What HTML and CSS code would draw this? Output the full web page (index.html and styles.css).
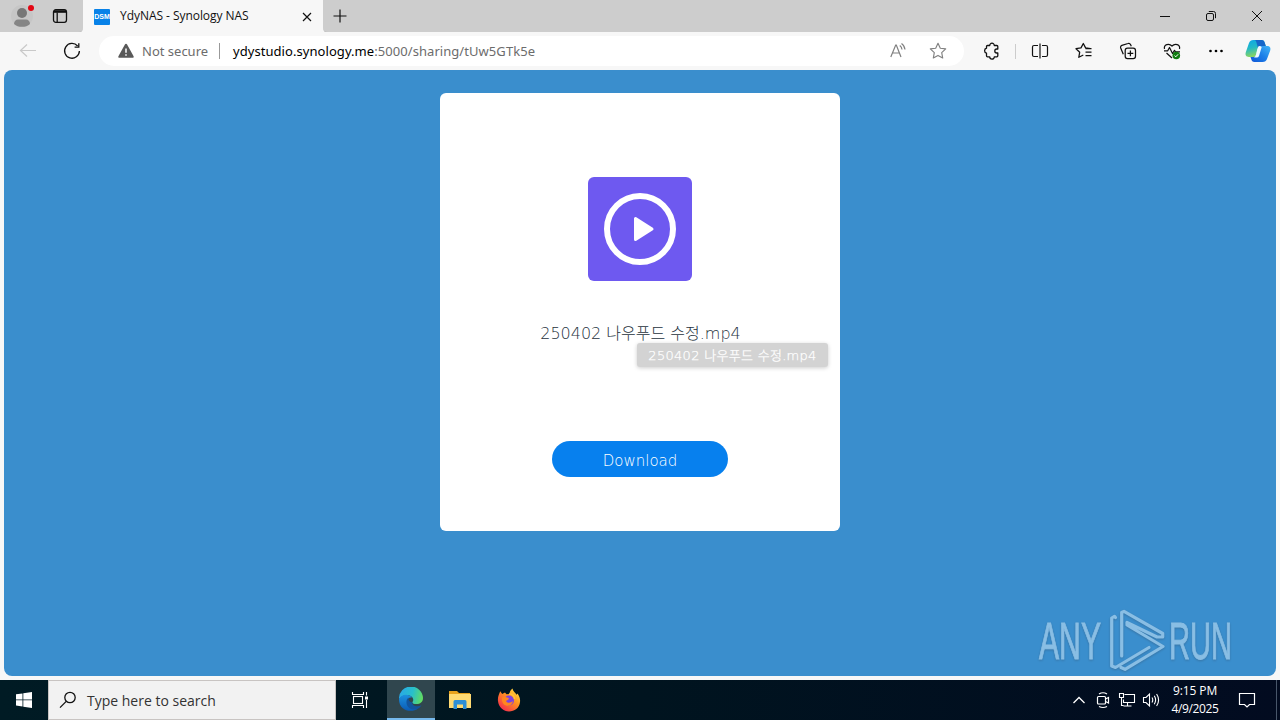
FILE: index.html
```html
<!DOCTYPE html>
<html lang="en">
<head>
<meta charset="utf-8">
<title>YdyNAS - Synology NAS</title>
<link rel="stylesheet" href="styles.css">
</head>
<body>
<div class="desktop">
  <header class="tabstrip">
    <div class="strip-left">
      <span class="cell w44"><svg width="24" height="26" viewBox="0 0 24 26"><circle cx="12" cy="13" r="11" fill="#c6c6c6"/><circle cx="12" cy="10" r="5" fill="#777"/><path d="M4 21c0-3 2-4.500 4-4.500h8c2 0 4 1.500 4 4.500-2 2-5 2.800-8 2.800S6 23 4 21z" fill="#858585"/><circle cx="21" cy="5" r="3" fill="#e30613"/></svg></span>
      <span class="cell w32"><svg width="16" height="16" viewBox="0 0 16 16" fill="none" stroke="#111" stroke-width="1.300"><rect x="1.500" y="1.700" width="13" height="12.600" rx="2.300"/><path d="M5.200 4.500v9.500"/><path d="M2 3.500h12" stroke-width="2.600"/></svg></span>
    </div>
    <div class="tab">
      <span class="favicon">DSM</span>
      <span class="tab-title">YdyNAS - Synology NAS</span>
      <svg class="tab-close" width="10" height="10" viewBox="0 0 10 10" stroke="#111" stroke-width="1.200"><path d="M1 1l8 8M9 1l-8 8"/></svg>
    </div>
    <div class="strip-right">
      <svg class="plus" width="14" height="14" viewBox="0 0 14 14" stroke="#111" stroke-width="1.200"><path d="M7 .5v13M.5 7h13"/></svg>
      <div class="controls">
        <span class="cell w46"><svg width="12" height="12" viewBox="0 0 12 12" stroke="#111"><path d="M1 6.500h10"/></svg></span>
        <span class="cell w46"><svg width="12" height="12" viewBox="0 0 12 12" stroke="#111" fill="none"><rect x="1.500" y="3.500" width="7" height="7" rx="1.500"/><path d="M3.800 1.500h4.700a2 2 0 0 1 2 2v4.700"/></svg></span>
        <span class="cell w46"><svg width="12" height="12" viewBox="0 0 12 12" stroke="#111"><path d="M1 1l10 10M11 1L1 11"/></svg></span>
      </div>
    </div>
  </header>

  <div class="toolbar">
    <div class="nav">
      <span class="cell w44"><svg width="18" height="16" viewBox="0 0 18 16" fill="none" stroke="#c9c9c9" stroke-width="1.200"><path d="M17 7.500H1.500M8 1.500l-6.500 6 6.500 6"/></svg></span>
      <span class="cell w44"><svg width="18" height="18" viewBox="0 0 18 18" fill="none" stroke="#111" stroke-width="1.300"><path d="M14.600 4A7.400 7.400 0 1 0 16.400 9"/><path d="M15.800 1.200v4h-4.200"/></svg></span>
    </div>
    <div class="address">
      <svg class="warn" width="16" height="16" viewBox="0 0 16 16"><path d="M6.900 1.400a1.250 1.250 0 0 1 2.200 0l6.500 11.800c.4.900-.2 1.600-1.100 1.600h-13c-.9 0-1.500-.7-1.100-1.600z" fill="#595959"/><path d="M8 5.500v4.200M8 11.200v1.600" stroke="#fff" stroke-width="1.500"/></svg>
      <span class="insecure">Not secure</span>
      <span class="rule"></span>
      <span class="url"><b>ydystudio.synology.me</b>:5000/sharing/tUw5GTk5e</span>
      <span class="cell w40 addr-icons"><svg width="18" height="18" viewBox="0 0 18 18" fill="none" stroke="#808080" stroke-width="1.200"><path d="M1.800 15L6.700 3h.6l4.700 12M3.500 11h6.800"/><path d="M10.800 3.500q2 1.500 2.200 4M12.500 1.500q3 2 3.500 6"/></svg></span>
      <span class="cell w40"><svg width="18" height="18" viewBox="0 0 18 18" fill="none" stroke="#808080" stroke-width="1.150" stroke-linejoin="round"><path d="M9 1.300l2.300 4.900 5.400.7-4 3.700 1 5.400L9 13.400 4.300 16l1-5.400-4-3.700 5.400-.7z"/></svg></span>
    </div>
    <div class="tools">
      <span class="cell w44"><svg width="18" height="18" viewBox="0 0 18 18" fill="none" stroke="#111" stroke-width="1.300" stroke-linejoin="round"><path d="M3.500 6.200V4.500a1 1 0 0 1 1-1h2.200a2.300 2.300 0 0 1 4.600 0h2.500a1 1 0 0 1 1 1V7h-1a2 2 0 0 0 0 4h1v2.800a1 1 0 0 1-1 1h-2.500a2.300 2.300 0 0 1-4.600 0H4.500a1 1 0 0 1-1-1v-2.600a2.600 2.600 0 0 1 0-5z"/></svg></span>
      <span class="tool-rule"></span>
      <span class="cell w44"><svg width="18" height="18" viewBox="0 0 18 18" fill="none" stroke="#111" stroke-width="1.200"><path d="M7 3.500H3A1.500 1.500 0 0 0 1.500 5v8A1.500 1.500 0 0 0 3 14.500h4M11 3.500h4A1.500 1.500 0 0 1 16.500 5v8a1.500 1.500 0 0 1-1.500 1.500h-4M9 1.500v15"/></svg></span>
      <span class="cell w44"><svg width="18" height="18" viewBox="0 0 18 18" fill="none" stroke="#111" stroke-width="1.250" stroke-linejoin="round"><path d="M15.500 6.500l-4.900-.6L8.300 1.500 6 5.900l-5 .8 3.700 3.500L3.800 15.300 8.300 13M10.500 6.500h6M10.500 10h6M10.500 13.500h6"/></svg></span>
      <span class="cell w44"><svg width="18" height="18" viewBox="0 0 18 18" fill="none" stroke="#111" stroke-width="1.250"><rect x="6.200" y="6.200" width="10.300" height="10.300" rx="2.300"/><path d="M11.400 8.500v5.800M8.500 11.400h5.800"/><path d="M4.300 12.200L1.700 6A2 2 0 0 1 2.900 3.400L9 1.500a2 2 0 0 1 2.500 1l.8 1.700"/></svg></span>
      <span class="cell w44"><svg width="18" height="18" viewBox="0 0 18 18" fill="none" stroke="#111" stroke-width="1.200" stroke-linejoin="round"><path d="M1.500 7C.5 2.500 6 .8 9 4c3-3.200 8.500-1.500 7.500 3M3.500 11L9 16"/><path d="M1 8.800h3.700l1.800-3.300 3 6 2-3.200 1 1.500H17"/><circle cx="13.300" cy="13.500" r="3.800" fill="#107c10" stroke="none"/><path d="M11.500 13.600l1.300 1.200 2.300-2.500" stroke="#fff" stroke-width="1"/></svg></span>
      <span class="cell w44"><svg width="16" height="6" viewBox="0 0 16 6"><circle cx="2.500" cy="3" r="1.350"/><circle cx="8" cy="3" r="1.350"/><circle cx="13.500" cy="3" r="1.350"/></svg></span>
      <span class="cell w40"><svg width="26" height="24" viewBox="0 0 26 24">
        <defs><linearGradient id="cpA" x1="0" y1="0" x2=".3" y2="1"><stop offset="0" stop-color="#0aa6e8"/><stop offset=".5" stop-color="#23b9c6"/><stop offset="1" stop-color="#8ed65b"/></linearGradient><linearGradient id="cpB" x1="1" y1="0" x2="0" y2="1"><stop offset="0" stop-color="#43b6f8"/><stop offset=".5" stop-color="#1b7fe8"/><stop offset="1" stop-color="#1055d6"/></linearGradient></defs>
        <path d="M8.500 1h8c2 0 2.800 1.300 3.300 3l1 3h-5c-1.600 0-2.300 1-2.700 2.300L11 16c-.5 1.400-1.300 2-2.700 2H4c-3 0-4-2-3.200-4.700L4 4c.8-2 2-3 4.500-3z" fill="url(#cpA)"/>
        <path d="M9.500 1h7c2 0 2.800 1.300 3.300 3l1 3h-5c-1.600 0-2.300 1-2.700 2.300L11.300 3c-.4-1.200-.8-1.800-1.800-2z" fill="#1767c9"/>
        <path d="M17.500 23h-8c-2 0-2.800-1.300-3.300-3l-.7-2h3c1.500 0 2.300-.7 2.800-2.200L13.500 9c.6-1.400 1.400-2 2.800-2H22c3 0 4 2 3.200 4.500L22 20c-.8 2-2 3-4.500 3z" fill="url(#cpB)"/><path d="M12.300 10l1-2.500q1.500-1 3.400.5L14 17q-.6 1.500-2.400 1.500H9q1.300-.6 1.900-2.500z" fill="#f0f9ff"/>
      </svg></span>
    </div>
  </div>

  <main class="viewport">
    <section class="card">
      <svg class="video" width="104" height="104" viewBox="0 0 104 104"><rect width="104" height="104" rx="6" fill="#6e59f0"/><circle cx="52" cy="52" r="33" fill="none" stroke="#fff" stroke-width="6"/><path d="M47.500 41.500v21L64 52z" fill="#fff" stroke="#fff" stroke-width="3" stroke-linejoin="round"/></svg>
      <div class="filename"><span class="label">250402 나우푸드 수정.mp4</span></div>
      <button class="download">Download</button>
      <div class="tooltip"><span class="label">250402 나우푸드 수정.mp4</span></div>
    </section>
    <div class="watermark">
      <span class="wm any">ANY</span>
      <svg width="60" height="64" viewBox="0 0 60 64" fill="none" stroke-linejoin="round" stroke-linecap="round" stroke="#90c2e6" stroke-width="3.200"><path d="M8.500 8.500L7.500 7.300 4.700 9V57L8.500 58.500 42 38.500"/><path d="M14.700 47V3.500L17 2.300 55.700 24.500V28H50L20 13.500V16L56 37.500 18 60.300 14 58.500"/></svg>
      <span class="wm run">RUN</span>
    </div>
  </main>

  <footer class="taskbar">
    <span class="cell w48"><svg width="16" height="16" viewBox="0 0 16 16" fill="#fff"><path d="M0 2.300L6.500 1.400v6.100H0zM7.300 1.300L16 0v7.500H7.300zM0 8.300h6.500v6.200L0 13.600zM7.300 8.300H16V16l-8.700-1.300z"/></svg></span>
    <div class="search">
      <svg width="18" height="18" viewBox="0 0 18 18" fill="none" stroke="#111" stroke-width="1.300"><circle cx="11" cy="6.500" r="5.200"/><path d="M7.200 10.400L1 16.600"/></svg>
      <span class="search-text">Type here to search</span>
    </div>
    <span class="cell taskview"><svg width="18" height="18" viewBox="0 0 18 18" fill="none" stroke="#fff" stroke-width="1.100"><rect x="2.500" y="5.500" width="9" height="7"/><path d="M1.500 1v2.500h11V1M1.500 17v-2.500h11V17M15.500 1v3.500M15.500 9v8"/><path d="M14 5.500h3v3h-3z" fill="#fff" stroke="none"/></svg></span>
    <span class="cell edge"><svg width="24" height="24" viewBox="0 0 24 24">
      <defs><linearGradient id="edA" x1="0" y1=".3" x2="1" y2=".5"><stop offset="0" stop-color="#29a8e8"/><stop offset=".55" stop-color="#28bfcb"/><stop offset="1" stop-color="#61dc62"/></linearGradient><linearGradient id="edB" x1="0" y1="0" x2="0" y2="1"><stop offset="0" stop-color="#1c91df"/><stop offset="1" stop-color="#0b5bb5"/></linearGradient></defs>
      <path d="M0 12A12 12 0 0 1 24 11c0 4-3 6-6.500 6-3 0-4.500-1-4-2 1-1.300 1-3 0-4.500C11 7 4 7 0 12z" fill="url(#edA)"/>
      <path d="M0 12C1.500 7 10 6 13 10.500c-4-.7-5.500 2.500-4.500 6C10 21 14 22.500 19 21.500 13 26 0 24.500 0 12z" fill="url(#edB)"/><path d="M9.500 10.500C6 13 7 20 12 22c4 1.500 8 .3 10.500-3.800-4 2-9.500 1-9.300-2.700-3-.8-4.200-2.500-3.700-5z" fill="#12549d"/>
    </svg></span>
    <span class="cell w49"><svg width="22" height="20" viewBox="0 0 22 20"><path d="M0 1h8l2 2h11v4H0z" fill="#e8a21c"/><path d="M0 4h22v14H0z" fill="#ffda72"/><path d="M4.500 19v-7.500A1.500 1.500 0 0 1 6 10h10a1.500 1.500 0 0 1 1.500 1.500V19H14v-4.500H8V19z" fill="#2f8fd5"/></svg></span>
    <span class="cell w49"><svg width="24" height="24" viewBox="0 0 24 24">
      <defs><linearGradient id="ff" x1="1" y1="0" x2=".2" y2="1"><stop offset="0" stop-color="#fff04a"/><stop offset=".45" stop-color="#ff9520"/><stop offset="1" stop-color="#f3264f"/></linearGradient></defs>
      <path d="M1 13C.5 9 2 6.500 3.200 3.300L5.200 6 8 4.600l1.500 1.700L12.500 6C12.500 3.500 14 1.500 15.500.5c.5 3 3 4 4 6.200l1-1.200c2 3 2.900 5 2.500 8.500-.6 6-5.500 9.500-11 9.500S1.500 19 1 13z" fill="url(#ff)"/><circle cx="12" cy="12.500" r="5" fill="#7c42df"/><path d="M5 9.500c2.500-1.500 4 0 6 .3 2 .3 0 2.700-2 2.900 1 2.800 4.500 2.500 7 .3-.5 4-4 5.500-7 4.500-3-.9-4.500-4-4-8z" fill="#ff861f"/><path d="M12 6c3.300-.5 5.500 2 5.500 5" fill="none" stroke="#ffc43a" stroke-width="1.500"/>
    </svg></span>
    <div class="tray">
      <span class="cell w24"><svg width="14" height="10" viewBox="0 0 14 10" fill="none" stroke="#fff" stroke-width="1.300"><path d="M1.500 8L7 2.500 12.500 8"/></svg></span>
      <span class="cell w24"><svg width="16" height="18" viewBox="0 0 16 18" fill="none" stroke="#fff" stroke-width="1.200"><rect x="2.500" y="5.500" width="8" height="7.500" rx="1"/><path d="M10.500 8l3-1.500v5.500l-3-1.500M4 3q4-2.500 8 0M4 15.500q4 2 8 0"/></svg></span>
      <span class="cell w24"><svg width="18" height="16" viewBox="0 0 18 16" fill="none" stroke="#fff" stroke-width="1.100"><path d="M6.500 2.500h10v8h-11V7.500M9.500 10.500v3M5.500 14h8M1.500 1.500h4v4h-4zM3.500 5.500v8h2"/></svg></span>
      <span class="cell w24"><svg width="18" height="16" viewBox="0 0 18 16" fill="none" stroke="#fff" stroke-width="1.100"><path d="M1.500 5.500H4L7.500 2v12L4 10.500H1.500zM10 5.500q1.500 2.500 0 5M12.300 3.800q2.600 4.200 0 8.400M14.600 2q4 6 0 12"/></svg></span>
      <div class="clock"><span class="time">9:15 PM</span><span class="date">4/9/2025</span></div>
      <span class="cell notice"><svg width="18" height="18" viewBox="0 0 18 18" fill="none" stroke="#fff" stroke-width="1.200"><path d="M1.500 2.500h15v11h-5L9 16l-2.500-2.500h-5z"/></svg></span>
      <span class="peek"></span>
    </div>
  </footer>
</div>
</body>
</html>
```

FILE: styles.css
```css
* { box-sizing: border-box; }
body { margin: 0; font-family: "Noto Sans", "Open Sans", "Noto Sans CJK KR", sans-serif; }
svg { display: block; flex: none; }
.desktop { width: 1280px; height: 720px; overflow: hidden; display: flex; flex-direction: column; background: #f7f7f7; }
.cell { display: flex; align-items: center; justify-content: center; flex: none; height: 100%; }
.w24 { width: 24px; }
.w32 { width: 32px; }
.w40 { width: 40px; }
.w44 { width: 44px; }
.w46 { width: 46px; }
.w48 { width: 48px; }
.w49 { width: 49px; }

.tabstrip { display: grid; grid-template-columns: 83px 240px 1fr; height: 32px; flex: none; }
.strip-left, .strip-right { background: #cdcdcd; border-bottom: 1px solid #c0c0c0; display: flex; align-items: center; }
.strip-left { border-bottom-right-radius: 5px; }
.strip-right { border-bottom-left-radius: 5px; justify-content: space-between; padding-left: 10px; }
.controls { display: flex; height: 32px; }
.tab { display: flex; align-items: center; padding-left: 11px; background: #f7f7f7; }
.favicon { width: 16px; height: 16px; background: #0882e8; border-radius: 1px; color: #fff; font: bold 7px/16px "Liberation Sans", sans-serif; text-align: center; }
.tab-title { width: 182px; margin-left: 10px; padding-bottom: 1px; font: 12px/16px "Open Sans", sans-serif; color: #111; white-space: nowrap; letter-spacing: -0.05px; }

.toolbar { display: flex; height: 38px; flex: none; background: #f7f7f7; }
.nav { display: flex; width: 99px; padding-left: 6px; }
.address { display: flex; align-items: center; width: 865px; height: 30px; margin-top: 4px; padding: 0 6px 0 19px; background: #fff; border-radius: 15px; font: 13px/20px "Noto Sans", sans-serif; color: #6c6c6c; white-space: nowrap; }
.insecure { width: 69px; margin-left: 8px; }
.rule { width: 1px; height: 16px; margin-left: 8px; background: #999; }
.url { margin-left: 13px; letter-spacing: .06px; }
.url b { font-weight: 400; color: #000; }
.addr-icons { margin-left: auto; }
.tools { display: flex; align-items: center; margin-left: 6px; }
.tool-rule { width: 1px; height: 15px; margin: 0 2px 0 1px; background: #ccc; }

.viewport { position: relative; height: 606px; margin: 0 4px; flex: none; background: #3a8ecd; border-radius: 8px; padding-top: 23px; }
.card { position: relative; display: flex; flex-direction: column; align-items: center; width: 400px; height: 438px; margin: 0 auto; padding-top: 84px; background: #fff; border-radius: 6px; }
.filename { height: 24px; margin-top: 41px; padding-left: 1px; font: 200 16px/24px "DejaVu Sans Light", "DejaVu Sans", "Noto Sans CJK KR", sans-serif; color: #26323d; white-space: nowrap; }
.download { width: 176px; height: 36px; margin-top: 95px; padding: 4px 0 0; border: 0; border-radius: 18px; background: #0780ee; color: #fff; font: 200 15px/24px "DejaVu Sans Light", "DejaVu Sans", sans-serif; }
.tooltip { position: absolute; left: 197px; top: 250px; width: 191px; height: 24px; padding-top: 1px; background: #d3d3d3; border-radius: 3px; box-shadow: 0 1px 4px rgba(0,0,0,.2); color: #fff; font: 200 13px/24px "DejaVu Sans Light", "DejaVu Sans", "Noto Sans CJK KR", sans-serif; letter-spacing: .3px; text-align: center; white-space: nowrap; }
.tooltip .label { -webkit-text-stroke: .25px #fff; }
.watermark { position: absolute; right: 41px; bottom: 3px; display: flex; align-items: center; width: 196px; height: 64px; opacity: .93; filter: drop-shadow(0 1px 1px rgba(50,75,100,.4)); }
.watermark svg { margin-left: 3px; }
.wm { display: block; flex: none; width: 65px; font: 52px/64px "Liberation Sans", sans-serif; color: #90c2e6; -webkit-text-stroke: 1px #90c2e6; transform: scaleX(.58); transform-origin: left center; white-space: nowrap; }
.run { margin-left: 2px; transform: scaleX(.56); }

.taskbar { display: flex; height: 40px; margin-top: 4px; flex: none; background: linear-gradient(90deg, #001b24, #00141f 50%, #020b20); color: #fff; }
.search { display: flex; align-items: center; width: 288px; padding-left: 10px; background: #f2f2f2; border: 1px solid #c8c4c2; color: #333; font: 14px/22px "Open Sans", sans-serif; }
.search-text { margin-left: 10px; padding-top: 2px; white-space: nowrap; }
.taskview { width: 51px; padding-right: 3px; }
.edge { width: 48px; background: #30464e; border-bottom: 2px solid #76b9ed; }
.tray { display: flex; margin-left: auto; }
.clock { display: flex; flex-direction: column; align-items: center; justify-content: center; width: 64px; font: 12px/18px "Open Sans", sans-serif; white-space: nowrap; }
.time { letter-spacing: -.1px; }
.date { letter-spacing: -.4px; }
.notice { width: 40px; }
.peek { width: 1px; height: 40px; margin-left: 9px; margin-right: 3px; background: #48566a; }
```
